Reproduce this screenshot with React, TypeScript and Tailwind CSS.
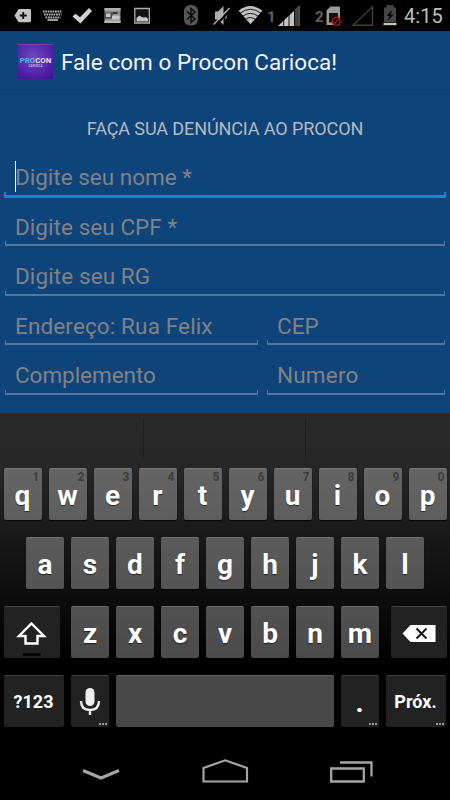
import React from 'react';

interface FieldProps {
  placeholder: string;
  className: string;
  focused?: boolean;
}

function Field({ placeholder, className, focused = false }: FieldProps) {
  return (
    <div className={`relative flex items-center pl-[10px] ${className}`}>
      {focused && <span className="absolute left-[10px] top-[14px] h-[31px] w-px bg-white" />}
      <span className="relative top-[5px] whitespace-nowrap text-[22.5px] leading-[30px] text-[#808286]">
        {placeholder}
      </span>
      {focused ? (
        <span className="absolute -bottom-px left-[-1px] right-[-1px] h-[6px] border-x-2 border-b-[3px] border-[#0490c6]" />
      ) : (
        <span className="absolute bottom-0 left-0 right-0 h-[5px] border-x border-b-2 border-[#4f7aa4] border-b-[#4f78a1]" />
      )}
    </div>
  );
}

interface KeyProps {
  children?: React.ReactNode;
  hint?: string;
  className?: string;
  more?: boolean;
}

function Key({ children, hint, className = 'w-[38px] bg-white/29', more = false }: KeyProps) {
  return (
    <div
      className={`relative flex h-[52px] shrink-0 items-center justify-center rounded-[2px] border-t border-white/15 font-bold text-white shadow-[0_1px_1px_rgba(0,0,0,0.8)] ${className}`}
    >
      {hint && <span className="absolute right-[2px] top-[1px] text-[12px] leading-[14px] text-[#3c3c3c]">{hint}</span>}
      {children}
      {more && (
        <span className="absolute bottom-[2px] right-[2px] flex gap-px">
          <i className="h-[2px] w-[2px] bg-[#999]" />
          <i className="h-[2px] w-[2px] bg-[#999]" />
          <i className="h-[2px] w-[2px] bg-[#999]" />
        </span>
      )}
    </div>
  );
}

function Letter({ char, hint }: { char: string; hint?: string }) {
  return (
    <Key hint={hint}>
      <span className="relative top-[1px] text-[28px] leading-[32px] [text-shadow:0_1px_1px_rgba(0,0,0,0.6)]">{char}</span>
    </Key>
  );
}

function StatusBar() {
  return (
    <div className="flex h-[31px] shrink-0 items-start bg-black text-[#bdbdbd]">
      <svg className="ml-[14px] shrink-0" width="18" height="31" viewBox="14 0 18 31">
        <path d="M19.500 9H29.500Q31 9 31 10.500V20.500Q31 22.300 29.500 22.300H19.500Q18.500 22.300 18 21.500L14.500 15.600L18 10Q18.500 9 19.500 9Z" fill="#c4c4c4" />
        <path d="M23.200 12V19M19.700 15.500H26.700" stroke="#111" strokeWidth="1.800" />
      </svg>
      <svg className="ml-[11px] shrink-0" width="20" height="31" viewBox="43 0 20 31">
        <path
          d="M43 11.500H62M44 14.500H61.500M45.500 17.500H60.500"
          stroke="#b5b5b5"
          strokeWidth="2"
          strokeDasharray="1.700 0.700"
        />
        <path d="M47.500 20H58" stroke="#b5b5b5" strokeWidth="1.700" />
      </svg>
      <svg className="ml-[9px] shrink-0" width="21" height="31" viewBox="72 0 21 31">
        <path d="M72.500 16.500L75.500 13.700L80 17.300L89 8L92 11L80.500 23.500Z" fill="#d2d2d2" />
      </svg>
      <svg className="ml-[11px] shrink-0" width="17" height="31" viewBox="104 0 17 31">
        <path d="M104.500 8H120.500V23H104.500Z" fill="#8d8d8d" />
        <path d="M104.500 8H120.500V10.500H104.500Z" fill="#b0b0b0" />
        <path d="M104.500 12.500H113V18.500H104.500Z" fill="#4c4c4c" />
        <path d="M106 13.500H110.500V17H106ZM112 15.500H119.500V19.500H112Z" fill="#c9c9c9" />
        <path d="M113 12H117.500V14H113Z" fill="#333" />
        <path d="M104.500 20.500H120.500V23H104.500Z" fill="#b8b8b8" />
      </svg>
      <svg className="ml-[13px] shrink-0" width="17" height="31" viewBox="134 0 17 31">
        <path d="M134.800 8.500H149.300V23H134.800Z" fill="#111" stroke="#adadad" strokeWidth="1.300" />
        <path d="M136.500 21.500V18L139.500 15.500L141.500 17L144 17.500L146 17L148 19V21.500Z" fill="#c5c5c5" />
      </svg>
      <svg className="ml-[32px] shrink-0" width="17" height="31" viewBox="183 0 17 31">
        <rect x="184" y="5" width="14" height="20.500" rx="6" fill="#555" />
        <path d="M187 11.500L195 19L191 22.500V8.500L195 12L187 19.500" fill="none" stroke="#080808" strokeWidth="1.400" />
      </svg>
      <svg className="ml-[12px] shrink-0" width="20" height="31" viewBox="212 0 20 31">
        <path d="M215 11.500H218L223.500 6V25L218 19.500H215Z" fill="#aeaeae" />
        <path d="M225.500 12Q227.500 15.500 225.500 19" fill="none" stroke="#777" strokeWidth="1.400" />
        <path d="M215.500 25.500L230.500 10" stroke="#000" strokeWidth="2" />
        <path d="M213.500 24.500L229.500 8" stroke="#b5b5b5" strokeWidth="1.300" />
      </svg>
      <svg className="ml-[6px] shrink-0" width="26" height="31" viewBox="238 0 26 31">
        <path d="M238.700 10.700Q250.500 1.500 262.300 10.700L250.500 24.300Z" fill="#c2c2c2" />
        <path
          d="M240 13.200Q250.500 5.300 261 13.200M242.500 16.400Q250.500 10.300 258.500 16.400M245.500 19.500Q250.500 15.500 255.500 19.500"
          fill="none"
          stroke="#000"
          strokeWidth="0.900"
        />
      </svg>
      <span className="ml-[3px] mt-[8px] w-[10px] text-[15px] font-bold leading-[18px] text-[#626262]">1</span>
      <svg className="ml-px shrink-0" width="23" height="31" viewBox="278 0 23 31">
        <path d="M278 26L299.500 5.500V26Z" fill="#c4c4c4" />
        <path d="M294.500 10.200L299.500 5.500V26H294.500Z" fill="#414141" />
        <path d="M283.700 18V26M289 12V26M294.500 8V26" stroke="#000" strokeWidth="0.900" />
      </svg>
      <span className="ml-[14px] mt-[8px] w-[10px] text-[15px] font-bold leading-[18px] text-[#626262]">2</span>
      <svg className="ml-px shrink-0" width="16" height="31" viewBox="326 0 16 31">
        <path d="M330.500 6.500H339Q340 6.500 340 7.500V25H326.500V10.500Z" fill="#999" />
        <path d="M329 13H338V22.500H329Z" fill="#101010" />
        <circle cx="336.300" cy="21.300" r="4" fill="#190303" stroke="#b5151b" strokeWidth="1.300" />
        <path d="M333.800 23.800L338.800 18.800" stroke="#b5151b" strokeWidth="1.200" />
      </svg>
      <svg className="ml-[9px] shrink-0" width="23" height="31" viewBox="351 0 23 31">
        <path d="M353 25.300L372.500 6.800V25.300Z" fill="none" stroke="#3f3f3f" strokeWidth="1.400" />
      </svg>
      <svg className="ml-[9px] shrink-0" width="15" height="31" viewBox="383 0 15 31">
        <path d="M386.500 5H393.500V7.500H396V22.500H384V7.500H386.500Z" fill="#454545" />
        <path d="M383.500 23H396.500V25.200H383.500Z" fill="#c4c4c4" />
        <path d="M392.500 9.500L386.500 16H389.500L387.500 21L393.800 14.500H390.500Z" fill="#050505" />
      </svg>
      <span className="ml-[6px] mt-[4px] text-[20px] leading-[24px] tracking-[0.1px]">4:15</span>
    </div>
  );
}

function ActionBar() {
  return (
    <div className="flex h-[60px] shrink-0 items-center border-b border-[#0c3c6b] pl-[18px] pt-[2px]">
      <div className="flex h-[35px] w-[35px] flex-col items-center justify-center border-t border-[#6c4a96] bg-[radial-gradient(circle_at_45%_35%,#7048bd,#3c0c9b)] font-bold">
        <span className="text-[7.8px] leading-[7px] text-[#e6e2f5]">
          <span className="text-[#61b4ee]">PRO</span>CON
        </span>
        <span className="text-[3px] leading-[4px] tracking-[0.2px] text-[#c4b7e6]">CARIOCA</span>
      </div>
      <h1 className="ml-[8px] whitespace-nowrap text-[22.5px] leading-[30px] tracking-[0.03px] text-[#f3f3f3]">
        Fale com o Procon Carioca!
      </h1>
    </div>
  );
}

const TOP_ROW = ['q', 'w', 'e', 'r', 't', 'y', 'u', 'i', 'o', 'p'];
const MIDDLE_ROW = ['a', 's', 'd', 'f', 'g', 'h', 'j', 'k', 'l'];
const BOTTOM_ROW = ['z', 'x', 'c', 'v', 'b', 'n', 'm'];

function Keyboard() {
  return (
    <div className="flex h-[327px] shrink-0 flex-col bg-[linear-gradient(#292929_0px,#272727_50px,#000_250px)]">
      {/* Suggestion strip */}
      <div className="grid h-[55px] shrink-0 grid-cols-[144px_162px_144px] pb-[10px] pt-[5px]">
        <div className="border-r border-[#1e1e1e]" />
        <div className="border-r border-[#1e1e1e]" />
      </div>
      <div className="flex flex-col gap-[17px]">
        <div className="flex justify-center gap-[7px]">
          {TOP_ROW.map((char, i) => (
            <Letter key={char} char={char} hint={String((i + 1) % 10)} />
          ))}
        </div>
        <div className="flex justify-center gap-[7px]">
          {MIDDLE_ROW.map((char) => (
            <Letter key={char} char={char} />
          ))}
        </div>
        <div className="flex justify-between px-[3.5px]">
          <Key className="w-[56px] bg-[#222]">
            <svg width="56" height="52" viewBox="0 0 56 52">
              <path d="M27.500 16.500L40 29H33.500V36.500H21.500V29H15Z" fill="none" stroke="#fff" strokeWidth="2.400" />
              <path d="M19 47.500H36.500" stroke="#000" strokeWidth="2.500" />
            </svg>
          </Key>
          <div className="flex gap-[7px]">
            {BOTTOM_ROW.map((char) => (
              <Letter key={char} char={char} />
            ))}
          </div>
          <Key className="w-[56px] bg-[#222]">
            <svg width="56" height="52" viewBox="0 0 56 52">
              <path d="M19.500 18H44.500V35H19.500L11.500 26.500Z" fill="#fff" />
              <path d="M25.500 21.500L35.500 31.500M35.500 21.500L25.500 31.500" stroke="#111" strokeWidth="1.800" />
            </svg>
          </Key>
        </div>
        <div className="flex gap-[7px] px-[3.5px]">
          <Key className="w-[60px] bg-[#222] text-[18px]">?123</Key>
          <Key className="w-[38px] bg-[#222]" more>
            <svg width="38" height="52" viewBox="0 0 38 52">
              <rect x="14.500" y="12" width="9" height="18" rx="4.500" fill="#eee" />
              <path d="M10 25Q10 34 19 34Q28 34 28 25M19 34V39" fill="none" stroke="#eee" strokeWidth="2.400" />
            </svg>
          </Key>
          <Key className="w-[218px] bg-[#484848]" />
          <Key className="w-[38px] bg-[#222] text-[28px]" more>
            <span className="relative top-[1px]">.</span>
          </Key>
          <Key className="w-[60px] bg-[#222] text-[18px]" more>
            Próx.
          </Key>
        </div>
      </div>
    </div>
  );
}

function NavBar() {
  return (
    <div className="flex h-[60px] items-center bg-black">
      <svg className="ml-[80px]" width="42" height="60" viewBox="80 740 42 60">
        <path d="M83 770.500L101 778L119 770.500" fill="none" stroke="#a5a5a5" strokeWidth="3" />
      </svg>
      <svg className="ml-[78px]" width="50" height="60" viewBox="200 740 50 60">
        <path d="M203.500 781.500V768L225.200 760.300L247 768V781.500Z" fill="none" stroke="#a5a5a5" strokeWidth="2.200" />
      </svg>
      <svg className="ml-[78px]" width="48" height="60" viewBox="328 740 48 60">
        <path d="M331.200 768.500H363.800V781.500H331.200ZM340 762.500H371.500V776.500" fill="none" stroke="#a5a5a5" strokeWidth="2.300" />
      </svg>
    </div>
  );
}

export default function App() {
  return (
    <div className="flex h-[800px] w-[450px] flex-col overflow-hidden bg-[#0e4479] font-['Roboto','Noto_Sans',sans-serif]">
      <StatusBar />
      <ActionBar />
      <div className="flex h-[322px] shrink-0 flex-col">
        <div className="flex h-[56px] items-center justify-center pt-[20px] text-[18px] leading-[24px] tracking-[-0.1px] text-[#b6bac0]">
          FAÇA SUA DENÚNCIA AO PROCON
        </div>
        <div className="flex flex-col px-[5px]">
          <Field placeholder="Digite seu nome *" className="h-[50px]" focused />
          <Field placeholder="Digite seu CPF *" className="h-[49px] tracking-[0.06px]" />
          <Field placeholder="Digite seu RG" className="h-[50px] tracking-[0.1px]" />
          <div className="grid grid-cols-[253px_178px] gap-[9px]">
            <Field placeholder="Endereço: Rua Felix" className="h-[49px] tracking-[0.13px]" />
            <Field placeholder="CEP" className="h-[49px]" />
          </div>
          <div className="grid grid-cols-[253px_178px] gap-[9px]">
            <Field placeholder="Complemento" className="h-[50px] tracking-[-0.05px]" />
            <Field placeholder="Numero" className="h-[50px] tracking-[0.2px]" />
          </div>
        </div>
      </div>
      <Keyboard />
      <NavBar />
    </div>
  );
}
